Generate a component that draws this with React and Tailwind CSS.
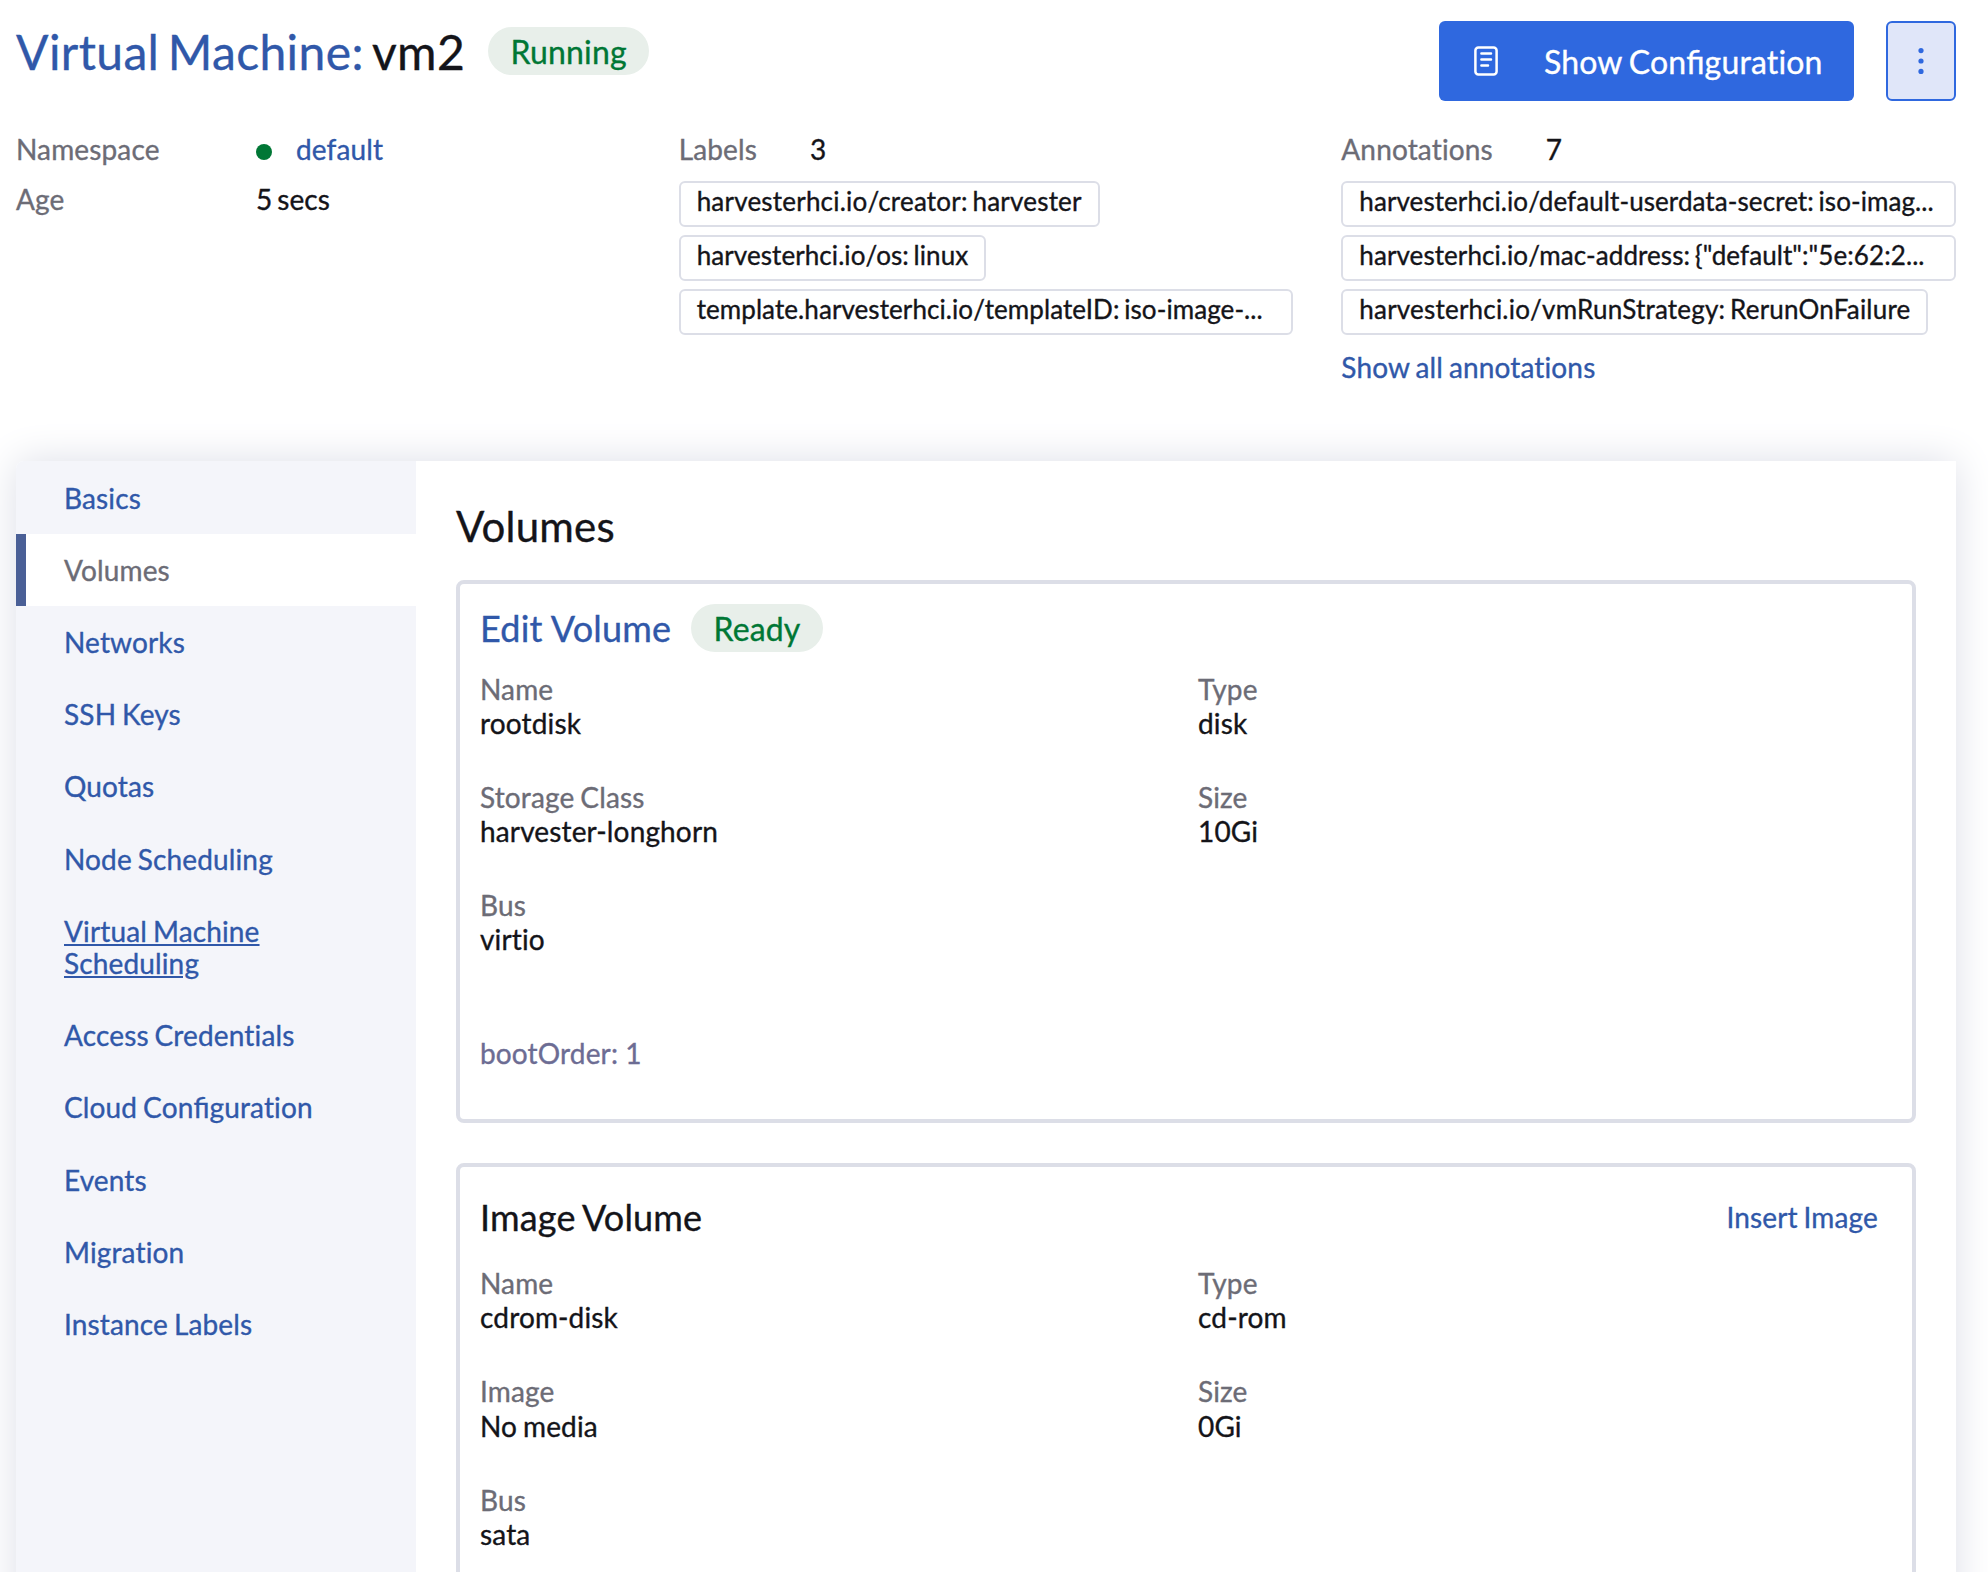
const tabs = [
  "Basics",
  "Volumes",
  "Networks",
  "SSH Keys",
  "Quotas",
  "Node Scheduling",
  "Virtual Machine Scheduling",
  "Access Credentials",
  "Cloud Configuration",
  "Events",
  "Migration",
  "Instance Labels",
];

// Letter spacing turns ligatures off; "fi" keeps its ligature.
function Label({ children }) {
  const parts = children.split("fi");
  return parts.map((p, i) => (
    <span key={i}>
      {i > 0 && <span className="tracking-normal!">fi</span>}
      {p}
    </span>
  ));
}

function Badge({ children }) {
  return (
    <span className="flex h-12 items-center rounded-full bg-[#e8efea] px-[22.5px] pt-px text-[32px] leading-none text-[#007735]">
      {children}
    </span>
  );
}

function Chip({ text, wide, full }) {
  return (
    <div
      className={`h-[46px] max-w-full rounded-md border-2 border-[#dcdee7] px-4 text-[26px] leading-[36px] ${full ? "w-full" : ""}`}
    >
      <div
        className={`whitespace-nowrap ${wide ? "tracking-[0.008em]!" : "tracking-[0.003em]!"} [word-spacing:-0.08em]!`}
      >
        {text}
      </div>
    </div>
  );
}

function MetaList({ title, count, items, children }) {
  return (
    <div className="flex min-w-0 flex-col items-start">
      <div className="-mt-px flex leading-[34px]">
        <span className="text-[#6c6c76]">{title}</span>
        <span className="ml-[53px]">{count}</span>
      </div>
      <div className="mt-[15px] flex w-full flex-col items-start gap-2">
        {items.map((i) => (
          <Chip key={i.text} {...i} />
        ))}
      </div>
      {children}
    </div>
  );
}

function Field({ label, value }) {
  return (
    <div>
      <div className="text-[#6c6c76]">{label}</div>
      <div>{value}</div>
    </div>
  );
}

function Fields({ items, className }) {
  return (
    <div className={`grid grid-cols-[718px_1fr] ${className}`}>
      {items.map(([label, value]) => (
        <Field key={label} label={label} value={value} />
      ))}
    </div>
  );
}

function ConfigIcon() {
  return (
    <svg width="24" height="30" viewBox="0 0 24 30" fill="none" stroke="currentColor" strokeWidth="2.5" strokeLinecap="round">
      <rect x="1.4" y="1.4" width="21.2" height="27.2" rx="3" />
      <path d="M7.4 7.6h9.6M7.4 13.5h9.6M7.4 19.4h6.6" />
    </svg>
  );
}

function KebabIcon() {
  return (
    <svg width="6" height="28" viewBox="0 0 6 28" fill="currentColor">
      <circle cx="3" cy="3.6" r="2.6" />
      <circle cx="3" cy="14" r="2.6" />
      <circle cx="3" cy="24.4" r="2.6" />
    </svg>
  );
}

export default function App() {
  return (
    <div className="h-[1572px] w-[1988px] overflow-hidden bg-white pl-4 pr-8 font-['Lato',sans-serif] text-[28px] text-[#141419] [-webkit-text-stroke:0.35px] [&_*]:tracking-[0.005em] [&_*]:[word-spacing:-0.05em]">
      <header className="flex h-[133px] items-start justify-between pt-[21px]">
        <div className="flex items-start pt-[1px]">
          <h1 className="w-[449px] whitespace-nowrap text-[48px] leading-[60px] tracking-[0.008em]! [word-spacing:-0.07em]!">
            <span className="tracking-[0.008em]! text-[#3058a9] [word-spacing:-0.09em]!">Virtual Machine:</span> vm2
          </h1>
          <div className="ml-[23px] pt-[5px]">
            <Badge>Running</Badge>
          </div>
        </div>
        <div className="flex gap-8">
          <button className="flex h-20 w-[415px] items-center rounded-md bg-[#2f68df] pl-[35px] text-[32px] text-white">
            <ConfigIcon />
            <span className="ml-[46px] pt-[2px]">
              <Label>Show Configuration</Label>
            </span>
          </button>
          <button className="flex h-20 w-[70px] items-center justify-center rounded-md border-2 border-[#2f68df] bg-[#e0e6f9] text-[#2f68df]">
            <KebabIcon />
          </button>
        </div>
      </header>

      <section className="grid h-[328px] grid-cols-3 gap-12">
        <div className="-mt-px grid grid-cols-[240px_1fr] content-start gap-y-4 leading-[34px]">
          <span className="text-[#6c6c76]">Namespace</span>
          <span className="flex items-center">
            <span className="mt-[6px] size-4 rounded-full bg-[#007735]" />
            <span className="ml-6 text-[#3058a9]">default</span>
          </span>
          <span className="text-[#6c6c76]">Age</span>
          <span className="[word-spacing:-0.09em]!">5 secs</span>
        </div>
        <MetaList
          title="Labels"
          count="3"
          items={[
            { text: "harvesterhci.io/creator: harvester", wide: true },
            { text: "harvesterhci.io/os: linux" },
            { text: "template.harvesterhci.io/templateID: iso-image-...", full: true },
          ]}
        />
        <MetaList
          title="Annotations"
          count="7"
          items={[
            { text: "harvesterhci.io/default-userdata-secret: iso-imag...", full: true },
            { text: 'harvesterhci.io/mac-address: {"default":"5e:62:2...', full: true },
            { text: "harvesterhci.io/vmRunStrategy: RerunOnFailure", wide: true },
          ]}
        >
          <a className="mt-[15px] leading-[34px] text-[#3058a9]">Show all annotations</a>
        </MetaList>
      </section>

      <main className="flex h-[1300px] rounded-tl-lg shadow-[0_0_40px_#dcdee7]">
        <nav className="w-[400px] rounded-tl-lg bg-[#f4f5fa] pt-[0.6px]">
          {tabs.map((t) => (
            <div
              key={t}
              className={
                t === "Volumes"
                  ? "border-l-[10px] border-[#4a5f96] bg-white py-5 pl-[38px] leading-[32.2px] text-[#6c6c76]"
                  : "py-5 pl-12 pr-24 leading-[32.2px] text-[#3058a9]"
              }
            >
              <span className={t.startsWith("Virtual") ? "underline" : ""}>
                <Label>{t}</Label>
              </span>
            </div>
          ))}
        </nav>
        <div className="flex-1 px-10 pt-10">
          <h2 className="text-[42px] leading-[51px]">Volumes</h2>
          <section className="mt-7 h-[543px] rounded-lg border-4 border-[#dcdee7] px-5 pt-5">
            <div className="flex items-center">
              <h3 className="w-[191px] whitespace-nowrap text-[36px] leading-[48px] tracking-[0.006em]! text-[#3058a9] [word-spacing:0em]!">
                Edit Volume
              </h3>
              <div className="ml-5">
                <Badge>Ready</Badge>
              </div>
            </div>
            <Fields
              className="mt-5 gap-y-10 leading-[34px]"
              items={[["Name", "rootdisk"], ["Type", "disk"], ["Storage Class", "harvester-longhorn"], ["Size", "10Gi"], ["Bus", "virtio"]]}
            />
            <p className="mt-20 leading-[34px] text-[#6c6c93] [word-spacing:0em]!">bootOrder: 1</p>
          </section>
          <section className="mt-10 h-[543px] rounded-lg border-4 border-[#dcdee7] px-5 pt-7">
            <div className="flex items-center justify-between pr-[14px]">
              <h3 className="text-[36px] leading-[44px]">Image Volume</h3>
              <a className="text-[#3058a9]">Insert Image</a>
            </div>
            <Fields
              className="mt-[27px] gap-y-[39.6px] leading-[34.4px]"
              items={[["Name", "cdrom-disk"], ["Type", "cd-rom"], ["Image", "No media"], ["Size", "0Gi"], ["Bus", "sata"]]}
            />
          </section>
        </div>
      </main>
    </div>
  );
}
